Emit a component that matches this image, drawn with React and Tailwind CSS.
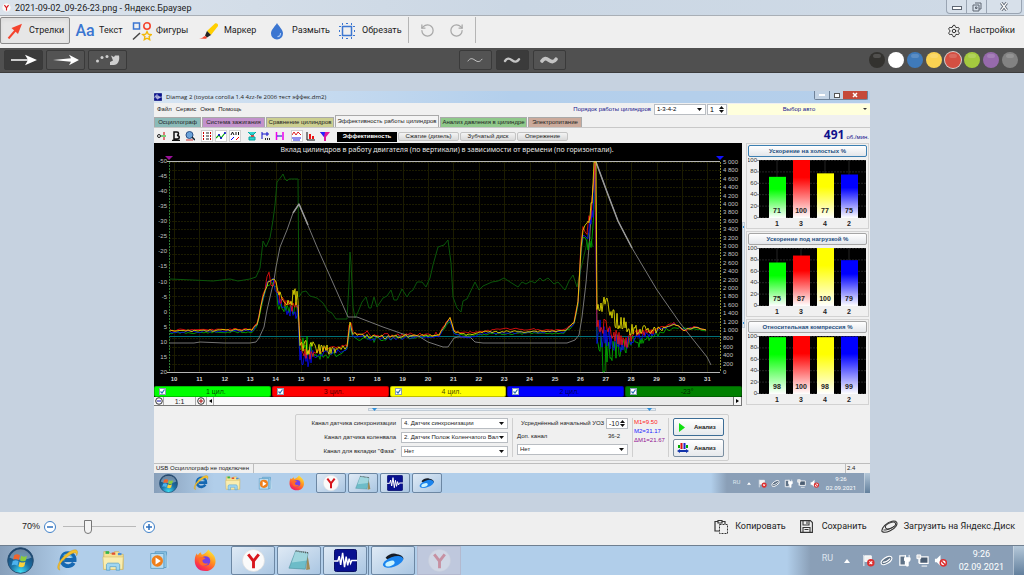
import React, { useState } from 'react'
import { Settings, RotateCcw, RotateCw } from 'lucide-react'

const SWATCHES = [
    { name: 'Чёрный', cls: 'bg-[#33322f]' },
    { name: 'Белый', cls: 'bg-white' },
    { name: 'Синий', cls: 'bg-[#3f7aba]' },
    { name: 'Жёлтый', cls: 'bg-[#fad252]' },
    { name: 'Красный', cls: 'bg-[#d34f42]' },
    { name: 'Зелёный', cls: 'bg-[#a4c93f]' },
    { name: 'Фиолетовый', cls: 'bg-[#966aac]' },
    { name: 'Серый', cls: 'bg-[#828282]' },
]

const TABS = [
    { label: 'Осциллограф', cls: 'w-[47px] bg-[#8abab8]' },
    { label: 'Система зажигания', cls: 'w-[63px] bg-[#c292cb]' },
    { label: 'Сравнение цилиндров', cls: 'w-[68px] bg-[#cccf90]' },
    { label: 'Эффективность работы цилиндров', cls: 'w-[104px] bg-[#f4f4f4]' },
    { label: 'Анализ давления в цилиндре', cls: 'w-[87px] bg-[#8fc88a]' },
    { label: 'Электропитание', cls: 'w-[54px] bg-[#cbaa9b]' },
]

const CYLINDERS = [
    { label: '1 цил.', cls: 'bg-[#00ff00]' },
    { label: '3 цил.', cls: 'bg-[#ff0000]' },
    { label: '4 цил.', cls: 'bg-[#ffff00]' },
    { label: '2 цил.', cls: 'bg-[#0000ff]' },
    { label: '-23°', cls: 'bg-[#008000]' },
]

const BAR_COLORS = ['#00ff00', '#ff0000', '#ffff00', '#0000ff']
const BAR_NAMES = [1, 3, 4, 2]

// [x, y, spread] key points of every trace
const TRACES = [
    {
        color: '#00b800', seed: 11,
        pts: [[16, 190, 1], [98, 189, 1], [103, 183, 1], [109, 156, 2], [113, 142, 2], [118, 141, 3], [122, 146, 5], [124, 163, 4], [134, 166, 5], [144, 168, 7], [146, 203, 9], [153, 203, 12], [162, 212, 5], [174, 214, 3], [193, 207, 2], [196, 184, 1], [199, 195, 2], [220, 197, 3], [235, 195, 3], [285, 193, 1], [292, 183, 1], [296, 178, 1], [300, 190, 1], [310, 193, 1], [330, 191, 1], [410, 190, 1], [420, 182, 1], [424, 164, 2], [427, 110, 3], [429, 95, 3], [434, 100, 9], [439, 90, 14], [441, 30, 0], [442, 60, 4], [443, 200, 12], [449, 213, 17], [460, 208, 17], [470, 203, 9], [485, 200, 5], [500, 193, 3], [512, 187, 2], [522, 185, 1], [540, 186, 1], [552, 188, 0]],
    },
    {
        color: '#0808ff', seed: 29,
        pts: [[16, 189, 1], [98, 188, 1], [103, 182, 1], [109, 155, 2], [113, 140, 2], [119, 138, 3], [125, 160, 5], [134, 168, 5], [144, 169, 8], [146, 213, 12], [155, 212, 12], [162, 212, 3], [180, 208, 3], [193, 206, 2], [196, 182, 1], [199, 194, 2], [220, 195, 3], [285, 194, 1], [292, 181, 1], [296, 177, 1], [300, 190, 1], [312, 195, 1], [330, 190, 1], [410, 189, 1], [420, 181, 1], [424, 162, 2], [427, 106, 3], [429, 94, 3], [434, 90, 6], [439, 70, 12], [441, 19, 0], [443, 190, 16], [455, 195, 13], [468, 203, 7], [480, 195, 5], [500, 190, 3], [512, 184, 1], [520, 181, 1], [530, 187, 1], [540, 184, 1], [552, 187, 0]],
    },
    {
        color: '#ff1010', seed: 47,
        pts: [[16, 187, 1], [98, 186, 1], [103, 180, 1], [109, 153, 2], [113, 136, 3], [115, 129, 1], [117, 140, 3], [122, 142, 4], [126, 155, 5], [134, 162, 5], [144, 166, 7], [146, 203, 8], [155, 212, 6], [162, 209, 3], [180, 204, 3], [193, 203, 2], [195, 182, 1], [197, 179, 1], [199, 190, 2], [208, 193, 2], [213, 188, 1], [218, 193, 2], [285, 191, 2], [292, 180, 1], [296, 174, 1], [300, 188, 1], [310, 190, 1], [330, 188, 1], [350, 186, 1], [410, 187, 1], [420, 179, 1], [424, 158, 2], [427, 102, 3], [429, 84, 2], [433, 88, 4], [438, 60, 8], [441, 19, 0], [443, 188, 14], [453, 182, 10], [465, 196, 8], [475, 197, 8], [485, 190, 4], [500, 189, 3], [512, 183, 1], [520, 180, 1], [530, 188, 1], [540, 184, 1], [552, 187, 0]],
    },
    {
        color: '#f4ec00', seed: 83,
        pts: [[16, 188, 1], [98, 187, 1], [103, 182, 1], [109, 155, 2], [114, 139, 2], [120, 136, 3], [124, 148, 5], [134, 160, 7], [139, 150, 11], [144, 158, 8], [146, 200, 6], [154, 203, 10], [162, 206, 5], [174, 207, 5], [185, 206, 3], [193, 204, 2], [196, 180, 1], [199, 191, 2], [220, 194, 2], [285, 192, 1], [292, 180, 1], [296, 175, 1], [300, 188, 1], [312, 192, 1], [330, 189, 1], [410, 188, 1], [420, 180, 1], [424, 160, 2], [427, 104, 3], [429, 88, 2], [434, 80, 5], [438, 55, 9], [440, 19, 0], [442, 19, 0], [443, 160, 12], [452, 162, 10], [457, 175, 9], [466, 178, 9], [475, 187, 6], [490, 186, 4], [503, 188, 4], [512, 184, 1], [520, 181, 1], [530, 187, 1], [540, 184, 1], [552, 187, 0]],
    },
]

const GREEN_LINE = '16,136 39,137 59,138 76,136 84,138 96,136 102,134 106,125 109,98 112,104 116,95 119,77 121,62 123,39 127,34 129,31 131,36 133,38 135,36 144,36 145,154 148,149 152,148 156,153 163,155 169,160 174,168 178,170 182,176 193,176 195,140 196,109 197,120 199,164 201,175 204,169 208,159 212,154 215,165 217,165 220,154 223,164 229,155 233,153 237,147 240,157 243,157 248,146 253,154 256,149 259,147 263,139 268,139 272,144 276,135 279,122 284,104 290,102 294,97 297,120 299,154 303,165 307,169 309,158 313,156 321,139 325,147 329,143 338,139 344,138 350,135 356,139 364,144 368,139 372,141 377,138 381,140 386,135 389,138 394,135 400,141 404,139 411,147 415,138 419,132 423,144 425,134 429,117 432,104 434,90 437,96 439,104'

const GREY_LINE = '16,200 40,200 46,199 70,200 96,200 102,199 105,195 110,184 113,167 120,137 122,124 126,104 133,87 139,70 145,61 163,104 183,149 194,174 203,174 229,184 249,191 266,194 274,199 289,204 294,204 300,195 304,194 316,194 321,199 329,200 413,200 421,197 425,192 428,174 432,140 435,104 439,44 442,19 453,49 464,78 478,105 503,147 526,180 553,214 557,222'

function tracePath({ pts, seed }) {
    let s = seed
    const rand = () => {
        s = (s * 9301 + 49297) % 233280
        return s / 233280 - 0.5
    }
    const out = []
    for (let i = 0; i < pts.length - 1; i++) {
        const [x0, y0, a0] = pts[i]
        const [x1, y1, a1] = pts[i + 1]
        const step = a0 > 3 ? 1 : 2
        for (let x = x0; x < x1; x += step) {
            const k = (x - x0) / (x1 - x0)
            const amp = a0 + (a1 - a0) * k
            const y = y0 + (y1 - y0) * k + rand() * 2 * amp
            out.push(`${x},${Math.min(229, Math.max(19, y)).toFixed(1)}`)
        }
    }
    const last = pts[pts.length - 1]
    out.push(`${last[0]},${last[1]}`)
    return out.join(' ')
}

function range(n) {
    return Array.from({ length: n }, (_, i) => i)
}

/* ---------- icons ---------- */

const YandexIcon = ({ className }) => (
    <svg viewBox="0 0 24 24" className={className}>
        <circle cx="12" cy="12" r="11.5" fill="#fafafa" stroke="#d9d9d9" strokeWidth=".6" />
        <path d="M6.5 5.5 12 12.6 17.5 5.5M12 12v8" fill="none" stroke="#d8161d" strokeWidth="3" />
    </svg>
)

const OrbIcon = ({ className }) => (
    <svg viewBox="0 0 28 28" className={className}>
        <defs>
            <radialGradient id="orb" cx=".5" cy=".95" r=".9">
                <stop offset="0" stopColor="#3fe0f5" />
                <stop offset=".45" stopColor="#1b6fa5" />
                <stop offset="1" stopColor="#1c3f66" />
            </radialGradient>
        </defs>
        <circle cx="14" cy="14" r="13.3" fill="url(#orb)" stroke="#274d70" />
        <path d="M2.5 11a12 12 0 0 1 23 0c-6 3-17 3-23 0z" fill="#fff" opacity=".35" />
        <path d="M7.5 8.5c2-1.2 4-1.2 6 .1l-1.2 4.8c-2-1.3-4-1.2-6-.2z" fill="#f0632a" />
        <path d="M14.7 9.2c2 1.2 4 1.2 6 0l-1.2 4.8c-2 1.2-4 1.2-6 0z" fill="#8ccc3c" />
        <path d="M6 14.5c2-1.2 4-1.1 6 .1l-1.2 4.8c-2-1.3-4-1.3-6-.3z" fill="#4db2ee" />
        <path d="M13.1 15.2c2 1.2 4 1.2 6 0L17.9 20c-2 1.2-4 1.2-6 0z" fill="#fbd13c" />
    </svg>
)

const ExplorerIcon = ({ className }) => (
    <svg viewBox="0 0 24 24" className={className}>
        <path d="M18.5 14.5a6.8 6.8 0 1 1 .9-3H8.5" fill="none" stroke="#1668b2" strokeWidth="4" />
        <path d="M17 9a6 6 0 0 0-9-2" fill="none" stroke="#57b5ea" strokeWidth="1.5" />
        <path d="M4 22C-1 21 3 12 10 6S23-1 22.5 4c-.1 1-.6 2-1 3 .3-3-1-4-5-2S4 14 3.5 18c-.2 2 .2 3 .5 4z" fill="#f3c02c" stroke="#c98f10" strokeWidth=".4" />
    </svg>
)

const FolderIcon = ({ className }) => (
    <svg viewBox="0 0 26 24" className={className}>
        <path d="M2 2h6l1 2h4l1-2h5l1 3h4v17H2z" fill="#f5e295" stroke="#c9a94d" strokeWidth=".7" />
        <path d="M4 1.5h4v3H4z" fill="#35b44b" />
        <path d="M11 3h4v2.5h-4z" fill="#e2512f" />
        <path d="M18 3.5h4V6h-4z" fill="#4b8fd9" />
        <path d="M1 8h23l-1 14H2z" fill="#f9edb0" stroke="#d7bd66" strokeWidth=".7" />
        <path d="M5 23v-6c0-1 1-2 2-2h11c1 0 2 1 2 2v6h-4v-4H9v4z" fill="#9fd6f2" stroke="#4f9cc9" strokeWidth=".8" />
    </svg>
)

const MediaIcon = ({ className }) => (
    <svg viewBox="0 0 24 24" className={className}>
        <path d="M7 2h13v18H7z" fill="#8cc3e4" stroke="#5c9bc4" />
        <path d="M20 4l3 16-3 1z" fill="#b9d9ec" />
        <path d="M2 4h15v17H2z" fill="#b8dcf2" stroke="#5c9bc4" />
        <circle cx="9.5" cy="12.5" r="6.5" fill="#f07f1b" />
        <path d="M7.5 8.5v8l6-4z" fill="#fff" />
    </svg>
)

const FirefoxIcon = ({ className }) => (
    <svg viewBox="0 0 24 24" className={className}>
        <defs>
            <linearGradient id="fox" x1=".8" y1="0" x2=".2" y2="1">
                <stop offset="0" stopColor="#fff03b" />
                <stop offset=".4" stopColor="#ff9620" />
                <stop offset=".75" stopColor="#ff4040" />
                <stop offset="1" stopColor="#e5127d" />
            </linearGradient>
        </defs>
        <path d="M15 .5c1 2 5 4 6.5 7.5 3 7-1 15-9.5 15S.5 17 .8 11.5C.9 8 2 6 3 4.5c.2 1 .5 1.5 1 2C5 5 6 4 7.5 3.5c-.3 1 0 2 .8 2.5 3-1 5-3 6.700-5.5z" fill="url(#fox)" />
        <circle cx="12" cy="12.5" r="5" fill="#7542e5" />
        <path d="M5 9c2-1 5-1 7 1l-3 1.5c-1 3 3 4.5 6 3-2 4-9 4-10-1.5z" fill="#ff6a2b" />
    </svg>
)

const NotepadIcon = ({ className }) => (
    <svg viewBox="0 0 24 24" className={className}>
        <path d="M20 4l3 17-4 1z" fill="#a08a55" />
        <path d="M8 2l13 2-3 17L1 20z" fill="#6dbcc8" stroke="#4a8d99" strokeWidth=".6" />
        <path d="M8 2l13 2-1.5 8L4 14z" fill="#c3e7ec" opacity=".6" />
        <path d="M8 2l13 2" stroke="#555" strokeWidth="1.6" strokeDasharray="1 1" />
    </svg>
)

const DiamagIcon = ({ className }) => (
    <svg viewBox="0 0 24 24" className={className}>
        <rect x=".5" y=".5" width="23" height="23" rx="2" fill="#08118f" stroke="#050a60" />
        <path d="M0 12.5h4l1.5-5 1.5 9L9 4l2 15 1.7-11 1.6 9 1.5-7 1.5 5 1.2-3H24" fill="none" stroke="#fff" strokeWidth="1.5" />
    </svg>
)

const DiskIcon = ({ className }) => (
    <svg viewBox="0 0 26 18" className={className}>
        <path d="M4 6c3-4 9-6 13-4 5 1 8 3 7 6l-12 5z" fill="#161c26" />
        <ellipse cx="12.5" cy="10.5" rx="12" ry="5.5" transform="rotate(-20 12.5 10.5)" fill="#1b84ee" />
        <ellipse cx="9" cy="12.5" rx="5.5" ry="2.8" transform="rotate(-20 9 12.5)" fill="#c9f3ff" />
    </svg>
)

const TrayFlag = ({ className }) => (
    <svg viewBox="0 0 14 14" className={className}>
        <path d="M2 1v12M3 2h7v6H3z" fill="#f2f2f2" stroke="#fff" />
        <circle cx="9.5" cy="9.5" r="4" fill="#dc2f2f" />
        <path d="M8 8l3 3M11 8l-3 3" stroke="#fff" strokeWidth="1.2" />
    </svg>
)

const TrayDisk = ({ className }) => (
    <svg viewBox="0 0 14 14" className={className}>
        <ellipse cx="7" cy="7" rx="6.5" ry="3.3" transform="rotate(-32 7 7)" fill="#5e7186" stroke="#fff" strokeWidth="1.3" />
        <path d="M3 9c3 0 6-2 8-4" stroke="#fff" strokeWidth="1.2" fill="none" />
    </svg>
)

const TrayPlug = ({ className }) => (
    <svg viewBox="0 0 14 14" className={className}>
        <path d="M2 2h6v10H2z" fill="#5e7186" stroke="#fff" strokeWidth="1.3" />
        <path d="M7 4h6v3l-2 2v4H9V9L7 7zM8 1v3M12 1v3" fill="#fff" stroke="#fff" />
    </svg>
)

const TrayNet = ({ className }) => (
    <svg viewBox="0 0 14 14" className={className}>
        <path d="M4 3h9v7H4z" fill="#4b5d72" stroke="#fff" strokeWidth="1.3" />
        <path d="M1 1h4v4H1zM6 13h6M3 5v5" fill="#ddd" stroke="#fff" />
    </svg>
)

const TraySound = ({ className }) => (
    <svg viewBox="0 0 14 14" className={className}>
        <path d="M1 5h2l4-4v12L3 9H1z" fill="#fff" />
        <circle cx="10" cy="9.5" r="3.3" fill="#fff" stroke="#dc2f2f" strokeWidth="1.6" />
        <path d="M8 7.5l4 4" stroke="#dc2f2f" strokeWidth="1.6" />
    </svg>
)

const ArrowIcon = () => (
    <svg viewBox="0 0 16 16" className="w-4 h-4">
        <path d="M1.5 15.5 10 5.5" stroke="#f4442e" strokeWidth="2" />
        <path d="M15 .8 4.5 5l6.5 6z" fill="#f4442e" />
    </svg>
)

const ShapesIcon = () => (
    <svg viewBox="0 0 20 20" className="w-5 h-5 shrink-0">
        <rect x="1.5" y="2" width="6" height="6" fill="none" stroke="#3b76d1" strokeWidth="1.5" />
        <circle cx="15" cy="5" r="3.2" fill="none" stroke="#f4442e" strokeWidth="1.6" />
        <path d="M1 18.5 8 12" stroke="#444" strokeWidth="1.5" />
        <path d="M15 10.5l1.3 2.7 3 .4-2.2 2 .6 3-2.7-1.4-2.7 1.4.6-3-2.2-2 3-.4z" fill="none" stroke="#f2b705" strokeWidth="1.4" />
    </svg>
)

const MarkerIcon = () => (
    <svg viewBox="0 0 20 18" className="w-5 h-[18px] shrink-0">
        <path d="M8 9 16 1.5c1.5-1 3.5.5 3 2.5L12 13z" fill="#ffcf00" />
        <path d="M8 9l4 4-4 2.5-2-2z" fill="#222" />
        <path d="M0 16.5c3 0 4-1.5 6-2.5l2 1.5c0 1-1 1.3-2 1.3z" fill="#f4442e" />
    </svg>
)

const DropIcon = () => (
    <svg viewBox="0 0 14 18" className="w-[14px] h-[18px] shrink-0">
        <path d="M7 1c1.5 3 6 6.5 6 10.5a6 6 0 0 1-12 0C1 7.5 5.5 4 7 1z" fill="#3b76d1" />
        <path d="M10.5 11c.2 2-1 3.5-3 3.7" fill="none" stroke="#a9c8f5" strokeWidth="1.2" />
    </svg>
)

const CropIcon = () => (
    <svg viewBox="0 0 16 16" className="w-4 h-4 shrink-0">
        <rect x="3.5" y="3.5" width="9" height="9" fill="none" stroke="#3b76d1" strokeWidth="1.5" />
        <path d="M0 3.5h2M14 3.5h2M0 12.5h2M14 12.5h2M3.5 0v2M12.5 0v2M3.5 14v2M12.5 14v2M7 .5h2M7 15.500h2M.5 7v2M15.500 7v2" stroke="#3b76d1" />
    </svg>
)

const Wave = ({ width }) => (
    <svg viewBox="0 0 18 8" className="w-[18px] h-2">
        <path d="M2 5c2-3 4-3 7-.8S14 6 16 3.2" fill="none" stroke="#c4c4c4" strokeWidth={width} strokeLinecap="round" />
    </svg>
)

const CopyIcon = () => (
    <svg viewBox="0 0 14 15" className="w-[14px] h-[15px]">
        <path d="M4 2.5H1v9.5h4M8 2.5h3V5M4 1.5h4V4H4z" fill="none" stroke="#333" strokeWidth="1.2" />
        <path d="M5.5 5.5h8v9h-8z" fill="none" stroke="#333" strokeDasharray="2 1" />
    </svg>
)

const SaveIcon = () => (
    <svg viewBox="0 0 13 13" className="w-[13px] h-[13px]">
        <path d="M.6.6h9.800l2 2v9.800H.6zM3 .6v4.4h6V.6M7 1.5v2.5M3 12V7.5h7V12M4.5 9.5h4" fill="none" stroke="#333" strokeWidth="1.1" />
    </svg>
)

const UploadDiskIcon = () => (
    <svg viewBox="0 0 17 13" className="w-[17px] h-[13px]">
        <path d="M1 11.5C0 8 6 2 11 1.2c5-.8 6 1.8 4 5S5 14 1 11.5z" fill="none" stroke="#333" strokeWidth="1.1" />
        <ellipse cx="9.5" cy="5.5" rx="5.5" ry="2.6" transform="rotate(-25 9.5 5.5)" fill="none" stroke="#333" />
        <path d="M2.5 10c3 .5 8-1.5 11-4" fill="none" stroke="#333" />
    </svg>
)

// small tool glyphs of the oscilloscope window, three to a group
const TOOL_GROUPS = [
    [
        { id: 'zero', box: false, art: <><circle cx="2" cy="5" r="1.5" fill="none" stroke="#222" /><path d="M4 5h5" stroke="#0a0" /><path d="M7 1v3M7 6v3" stroke="#c00" /></> },
        { id: 'bold', box: false, art: <><path d="M3 1h3c2 0 2 3 0 3.500 3 0 3 3.500 0 3.500H3zM1 9.500h8" fill="none" stroke="#111" strokeWidth="1.500" /></> },
        { id: 'globe', box: false, art: <><circle cx="4.500" cy="4" r="3.500" fill="#6aa3da" stroke="#2b4f86" /><path d="M7 6l3 3" stroke="#123" strokeWidth="1.500" /><path d="M1 9h7" stroke="#c33" /></> },
    ],
    [
        { id: 'span', box: true, art: <><path d="M1.500 1v8M8.500 1v8" stroke="#c00" strokeDasharray="2 1" /><path d="M4 2h3M4 5h3M4 8h3" stroke="#222" /></> },
        { id: 'curve', box: true, art: <><path d="M0 7l3-3 2 3 4-5" fill="none" stroke="#0a0" strokeWidth="1.200" /><path d="M2 4h2M4 7h2M8 2h2" stroke="#00c" strokeWidth="1.500" /></> },
        { id: 'values', box: true, art: <><path d="M1 4l1.500-3L4 4M6 1v3M8.500 1v3" fill="none" stroke="#111" /><path d="M1 9l3-3" stroke="#00f" /><path d="M6 9l3-3" stroke="#f00" /></> },
    ],
    [
        { id: 'channels', box: false, art: <><path d="M1 1l3 3h2l3-3M2 6h6v3H2z" fill="#2ed3cf" stroke="#08a39f" /><path d="M4 5h3" stroke="#d22" strokeWidth="1.500" /></> },
        { id: 'shift', box: false, art: <><path d="M1 1v7M1 3h7M6 1v4" stroke="#11c" fill="none" /><path d="M4 8h6" stroke="#333" strokeWidth="2" strokeDasharray="1 1" /></> },
        { id: 'mark', box: false, art: <><path d="M1.500 1v8" stroke="#e0e" strokeWidth="1.500" /><path d="M2 5h5" stroke="#11c" /><path d="M8 1v8" stroke="#e0e" strokeWidth="1.500" /></> },
    ],
    [
        { id: 'sum', box: true, art: <><path d="M0 4l2-3 2 3 2-3 3 3" fill="none" stroke="#d22" /><path d="M0 7h9M1 9h7" stroke="#22d" strokeWidth="1.200" /></> },
        { id: 'chart', box: false, art: <><path d="M1 1v8h8" fill="none" stroke="#111" /><path d="M4 3v5M7 5v3" stroke="#e11" strokeWidth="2" /></> },
        { id: 'filter', box: false, art: <><path d="M0 1h10L6 6v4H4V6z" fill="#e11a9c" /><path d="M0 1h5l-1 5z" fill="#22f" /></> },
    ],
]

/* ---------- viewer chrome ---------- */

function TitleBar() {
    return (
        <header className="flex h-4 items-center justify-between bg-linear-to-r from-[#dbe3ec] via-[#cbd7e4] to-[#cfdae6] border-b border-[#a9afb6] pl-[2px]">
            <div className="flex items-center gap-1">
                <YandexIcon className="w-[9px] h-[9px]" />
                <h1 className="text-[9px] leading-3">2021-09-02_09-26-23.png - Яндекс.Браузер</h1>
            </div>
            <div className="mr-[2px] flex h-[14px] self-start rounded-b border border-t-0 border-[#9aa5b3] bg-[#d7e0ea]">
                <button aria-label="Свернуть" className="flex w-5 items-center justify-center border-r border-[#9aa5b3]">
                    <span className="mt-[2px] h-1 w-[10px] border border-[#5f6773] bg-white" />
                </button>
                <button aria-label="Восстановить" className="flex w-5 items-center justify-center border-r border-[#9aa5b3]">
                    <svg viewBox="0 0 10 10" className="w-[10px] h-[10px]"><path d="M3 1h6v6H7M1 3h6v6H1zM3.500 5h1.500v1.500H3.500z" fill="none" stroke="#5f6773" /></svg>
                </button>
                <button aria-label="Закрыть" className="flex w-[34px] items-center justify-center">
                    <svg viewBox="0 0 10 10" className="w-[10px] h-[9px]"><path d="M2 1l6 8M8 1 2 9" stroke="#5f6773" strokeWidth="3.400" /><path d="M2 1l6 8M8 1 2 9" stroke="#fff" strokeWidth="1.400" /></svg>
                </button>
            </div>
        </header>
    )
}

function ToolButton({ icon, label, className }) {
    return (
        <button className={`flex h-[27px] items-center ${className}`}>
            {icon}
            <span>{label}</span>
        </button>
    )
}

function Toolbar() {
    return (
        <nav className="flex h-8 items-start bg-[#efefef] pt-px text-[9px]">
            <ToolButton icon={<ArrowIcon />} label="Стрелки" className="w-[70px] gap-[6px] rounded-xs border border-[#8b8b8b] bg-[#e6e6e6] pl-[6px] shadow-inner" />
            <ToolButton icon={<span className="w-5 text-[16px] leading-4 font-medium text-[#3b76d1]">Aa</span>} label="Текст" className="w-[61px] gap-1 pl-[5px]" />
            <ToolButton icon={<ShapesIcon />} label="Фигуры" className="w-[66px] gap-1 pl-px" />
            <ToolButton icon={<MarkerIcon />} label="Маркер" className="w-[71px] gap-[5px] pl-[2px]" />
            <ToolButton icon={<DropIcon />} label="Размыть" className="w-[69px] gap-2 pl-[2px]" />
            <ToolButton icon={<CropIcon />} label="Обрезать" className="w-[71px] gap-[7px] pl-[2px]" />
            <div className="flex h-[26px] items-center gap-[14px] border-x border-[#b5b5b5] px-[11px] text-[#a8a8a8]">
                <button aria-label="Отменить"><RotateCcw size={15} /></button>
                <button aria-label="Повторить"><RotateCw size={15} /></button>
            </div>
            <button className="ml-auto mr-[9px] flex h-[27px] items-center gap-2">
                <Settings size={14} strokeWidth={1.5} />
                <span>Настройки</span>
            </button>
        </nav>
    )
}

function StyleButton({ active, label, onClick, wide, children }) {
    return (
        <button
            aria-label={label}
            onClick={onClick}
            className={`flex h-5 items-center justify-center rounded-xs border border-[#3a3a3a] ${wide ? 'w-[39px]' : 'w-[33px]'} ${active ? 'bg-[#3b3b3b]' : 'bg-[#535353]'}`}
        >
            {children}
        </button>
    )
}

function StyleBar() {
    const [arrow, setArrow] = useState(0)
    const [weight, setWeight] = useState(1)
    const [color, setColor] = useState(4)

    return (
        <div className="grid h-[25px] grid-cols-[1fr_auto_1fr] items-center border-b border-[#3c3c3c] bg-[#505050] px-1">
            <div className="flex gap-[3px]">
                <StyleButton wide label="Тонкая стрелка" active={arrow === 0} onClick={() => setArrow(0)}>
                    <svg viewBox="0 0 26 12" className="w-[26px] h-3"><path d="M0 6h20" stroke="#fff" strokeWidth="1.500" /><path d="M14 .8 26 6l-12 5.200L17 6z" fill="#fff" /></svg>
                </StyleButton>
                <StyleButton wide label="Стрелка" active={arrow === 1} onClick={() => setArrow(1)}>
                    <svg viewBox="0 0 26 12" className="w-[26px] h-3"><path d="M0 6 18 4.200 16 .8 26 6l-10 5.200L18 7.800z" fill="#fff" /></svg>
                </StyleButton>
                <StyleButton wide label="Пунктир" active={arrow === 2} onClick={() => setArrow(2)}>
                    <svg viewBox="0 0 26 12" className="w-[26px] h-3" fill="#cfcfcf"><circle cx="2.500" cy="7" r="1.500" /><circle cx="7" cy="3.500" r="1.500" /><circle cx="12" cy="2.500" r="1.500" /><path d="M16 1.500l3 1.500 1-1.500h4c1 5-1 10-6 9.500h-3V8l3-1.500z" /></svg>
                </StyleButton>
            </div>
            <div className="flex gap-1">
                {[1, 2.4, 3.6].map((w, i) => (
                    <StyleButton key={w} label={`Толщина ${i + 1}`} active={weight === i} onClick={() => setWeight(i)}>
                        <Wave width={w} />
                    </StyleButton>
                ))}
            </div>
            <div className="flex items-center justify-end gap-[3px] pr-[2px]">
                {SWATCHES.map((s, i) => (
                    <button
                        key={s.name}
                        aria-label={s.name}
                        onClick={() => setColor(i)}
                        className={`flex h-4 w-4 justify-center rounded-full ${s.cls} ${color === i ? 'ring-1 ring-[#d9d0cf]' : ''}`}
                    >
                        <span className="mt-[2px] h-1 w-2 rounded-full bg-white/15" />
                    </button>
                ))}
            </div>
        </div>
    )
}

function BottomBar() {
    return (
        <footer className="flex h-[33px] items-center justify-between bg-[#efefef] pb-1 pl-[22px] pr-[9px] text-[9px]">
            <div className="flex items-center">
                <label htmlFor="zoom" className="w-[22px] font-['Liberation_Sans',sans-serif]">70%</label>
                <button aria-label="Уменьшить" className="flex">
                    <svg viewBox="0 0 12 12" className="w-3 h-3"><circle cx="6" cy="6" r="5.500" fill="#fff" stroke="#3f80c8" /><path d="M3 6h6" stroke="#2c6fbd" strokeWidth="1.500" /></svg>
                </button>
                <input
                    id="zoom"
                    type="range"
                    min="0"
                    max="100"
                    defaultValue="32"
                    className="mx-[7px] h-4 w-[73px] appearance-none bg-transparent [&::-webkit-slider-runnable-track]:h-px [&::-webkit-slider-runnable-track]:bg-[#b9b9b9] [&::-webkit-slider-thumb]:-mt-[6px] [&::-webkit-slider-thumb]:h-[14px] [&::-webkit-slider-thumb]:w-2 [&::-webkit-slider-thumb]:appearance-none [&::-webkit-slider-thumb]:rounded-b-full [&::-webkit-slider-thumb]:border [&::-webkit-slider-thumb]:border-[#777] [&::-webkit-slider-thumb]:bg-[#f3f3f3]"
                />
                <button aria-label="Увеличить" className="flex">
                    <svg viewBox="0 0 12 12" className="w-3 h-3"><circle cx="6" cy="6" r="5.500" fill="#fff" stroke="#3f80c8" /><path d="M3 6h6M6 3v6" stroke="#2c6fbd" strokeWidth="1.500" /></svg>
                </button>
            </div>
            <div className="flex items-center gap-[14px]">
                <button className="flex items-center gap-[7px]"><CopyIcon />Копировать</button>
                <button className="flex items-center gap-[9px]"><SaveIcon />Сохранить</button>
                <button className="flex items-center gap-[6px]"><UploadDiskIcon />Загрузить на Яндекс.Диск</button>
            </div>
        </footer>
    )
}

function Taskbar({ small }) {
    const icon = small ? 'w-4 h-4' : 'w-[23px] h-[23px]'
    const pin = small ? 'flex w-8 items-center justify-center' : 'flex w-[46px] items-center justify-center'
    const orb = small ? 'flex w-[31px] items-center justify-center pr-[2px]' : 'flex w-11 items-center justify-center pr-1'
    const task = `flex items-center justify-center rounded-xs border border-[#6c87a3] bg-linear-to-br from-[#dfeaf5] to-[#aac6e2] ${small ? 'w-[30px]' : 'w-11'}`
    const tray = small ? 'w-[9px] h-[9px]' : 'w-[13px] h-[13px]'

    return (
        <div className={`flex justify-between overflow-hidden bg-[#b1ceea] ${small ? 'h-5' : 'h-[30px] border-t border-[#6f7f90]'}`}>
            <div className={`flex bg-linear-to-r from-[#879fba] to-transparent bg-no-repeat ${small ? 'bg-size-[60px_100%]' : 'bg-size-[70px_100%]'}`}>
                <button aria-label="Пуск" className={orb}><OrbIcon className={small ? 'w-[19px] h-[19px]' : 'w-[27px] h-[27px]'} /></button>
                <button aria-label="Internet Explorer" className={pin}><ExplorerIcon className={icon} /></button>
                <button aria-label="Проводник" className={pin}><FolderIcon className={icon} /></button>
                <button aria-label="Media Player" className={pin}><MediaIcon className={small ? 'w-[15px] h-[15px]' : 'w-[21px] h-[21px]'} /></button>
                <button aria-label="Firefox" className={pin}><FirefoxIcon className={icon} /></button>
                <div className="ml-[3px] flex gap-[2px]">
                    <button aria-label="Яндекс" className={task}><YandexIcon className={icon} /></button>
                    <button aria-label="Блокнот" className={task}><NotepadIcon className={icon} /></button>
                    <div className={small ? 'flex' : 'flex border-r border-[#6c87a3] pr-px'}>
                        <button aria-label="Diamag" className={task}><DiamagIcon className={icon} /></button>
                    </div>
                    <button aria-label="Яндекс.Диск" className={task}><DiskIcon className={icon} /></button>
                    {!small && (
                        <button aria-label="Скриншот" className="flex w-11 items-center justify-center border border-[#b3b9cf] bg-[#bfc8dd]">
                            <YandexIcon className="w-[23px] h-[23px] opacity-30" />
                        </button>
                    )}
                </div>
            </div>
            <div className={`flex items-center bg-linear-to-r from-transparent to-[#8a9fb7] to-10% text-white ${small ? 'pl-[22px] text-[6px] leading-[9px]' : 'pl-[35px] text-[9px] leading-[13px]'}`}>
                <span className={small ? 'w-[11px] pb-[3px] text-[#dde5ee]' : 'w-[14px] pb-[5px] text-[#dde5ee]'}>RU</span>
                <svg viewBox="0 0 6 4" className={small ? 'mx-[3px] w-1 h-[3px]' : 'mx-2 w-[6px] h-1'}><path d="M3 0l3 4H0z" fill="#fff" /></svg>
                <div className={small ? 'flex gap-1 pl-1' : 'flex gap-[5px] pl-1'}>
                    <TrayFlag className={tray} />
                    <TrayDisk className={tray} />
                    <TrayPlug className={tray} />
                    <TrayNet className={tray} />
                    <TraySound className={tray} />
                </div>
                <div className={small ? 'ml-[7px] mr-2 text-center' : 'ml-3 mr-[9px] text-center'}>
                    <div>9:26</div>
                    <div>02.09.2021</div>
                </div>
                <div className={`h-full border-l border-[#d5e0ea]/60 bg-linear-to-b from-[#b5c8d9] to-[#63809d] ${small ? 'w-[6px]' : 'w-[11px]'}`} />
            </div>
        </div>
    )
}

/* ---------- oscilloscope window ---------- */

const DownMark = () => (
    <svg viewBox="0 0 5 3" className="pointer-events-none w-[5px] h-[3px]"><path d="M0 0h5L2.500 3z" fill="#111" /></svg>
)

const SplitMark = () => (
    <svg viewBox="0 0 5 3" className="w-[5px] h-[3px]"><path d="M0 0h5L2.500 3z" fill="#2f8fd8" /></svg>
)

function Combo({ id, value, className }) {
    return (
        <div className={`relative flex h-[11px] items-center border border-[#b9bdc2] bg-white ${className}`}>
            <select id={id} className="h-full w-full appearance-none bg-transparent pl-[2px] pr-2 text-[6px] leading-[9px] outline-none">
                <option>{value}</option>
            </select>
            <div className="pointer-events-none absolute right-[3px]"><DownMark /></div>
        </div>
    )
}

function Spin({ id, value, className }) {
    return (
        <div className={`flex h-[11px] shrink-0 items-center border border-[#b9bdc2] bg-white ${className}`}>
            <input id={id} defaultValue={value} className="w-0 flex-1 pl-[2px] text-[7px] leading-[9px] outline-none" />
            <div className="flex flex-col gap-px pr-[2px]">
                <button aria-label="Больше" className="flex"><svg viewBox="0 0 5 3" className="w-[5px] h-[3px]"><path d="M0 3h5L2.500 0z" fill="#111" /></svg></button>
                <button aria-label="Меньше" className="flex"><DownMark /></button>
            </div>
        </div>
    )
}

function MainChart() {
    return (
        <svg viewBox="0 0 588 243" className="block w-full bg-black font-['Liberation_Sans',sans-serif] text-[6px]" role="img">
            <text x="293" y="9" textAnchor="middle" fill="#e4e4e4" className="font-['Noto_Sans',sans-serif] text-[7px]">
                Вклад цилиндров в работу двигателя (по вертикали) в зависимости от времени (по горизонтали).
            </text>
            <g stroke="#1b1b00" shapeRendering="crispEdges">
                {range(26).map(i => <path key={i} d={`M15 ${Math.round(19 + i * 8.4) + 0.5}H566`} strokeDasharray="2 1" />)}
                {range(22).map(i => <path key={i} d={`M${Math.round(20 + i * 25.4) + 0.5} 19V229`} />)}
            </g>
            <g shapeRendering="crispEdges" fill="none">
                <path d="M15 19V229" stroke="#2c7a34" strokeDasharray="2 1" />
                <path d="M566 19V229" stroke="#8f8f30" strokeDasharray="2 1" />
                <path d="M13 18.500H566M13 229.500H566" stroke="#b5b5b5" />
                <path d="M15 193.500H566" stroke="#007078" />
            </g>
            <path d="M11 13h8l-4 4z" fill="#9a109a" />
            <path d="M562 13h8l-4 4z" fill="#1010ff" />
            <g fill="#c2c2c2" textAnchor="end">
                {range(15).map(i => <text key={i} x="13" y={20 + i * 15.07}>{i * 5 - 50}</text>)}
            </g>
            <g fill="#c2c2c2">
                {range(26).map(i => {
                    const v = 5000 - i * 200
                    const label = v >= 1000 ? `${Math.floor(v / 1000)} ${String(v % 1000).padStart(3, '0')}` : v
                    return <text key={v} x="569" y={21 + i * 8.4}>{label}</text>
                })}
            </g>
            <g fill="#d4d4d4" textAnchor="middle" fontWeight="bold">
                {range(22).map(i => <text key={i} x={20 + i * 25.4} y="238">{i + 10}</text>)}
            </g>
            <g fill="none" strokeLinejoin="round">
                <polyline points={GREEN_LINE} stroke="#0a560a" />
                <polyline points={GREY_LINE} stroke="#757575" />
                <path d="M139 70l6-9 9 21M442 19l11 30 11 29 14 27" stroke="#9a9a9a" strokeWidth="1.500" />
                {TRACES.map(t => <polyline key={t.seed} points={tracePath(t)} stroke={t.color} strokeWidth=".8" />)}
            </g>
        </svg>
    )
}

function BarPanel({ title, values, active }) {
    const id = `bars-${values.join('-')}`
    return (
        <section className="border border-[#d2d2d2] p-px">
            <button className={`block h-3 w-full rounded-xs border bg-linear-to-b from-white to-[#e3e6ea] text-[6px] leading-[10px] font-bold text-[#1d4e80] ${active ? 'border-[#3c7fb1]' : 'border-[#a5a5a5]'}`}>
                {title}
            </button>
            <svg viewBox="0 0 119 70" className="block w-full text-[6px]" role="img">
                <defs>
                    {BAR_COLORS.map(c => (
                        <linearGradient key={c} id={`${id}${c.slice(1)}`} x1="0" y1="0" x2="0" y2="1">
                            <stop offset=".3" stopColor={c} />
                            <stop offset="1" stopColor="#fff" />
                        </linearGradient>
                    ))}
                </defs>
                <rect x="11" y="3" width="107" height="58" fill="#000" />
                {range(6).map(i => (
                    <g key={i}>
                        <path d={`M11 ${3.5 + i * 11.4}H118`} stroke="#333" strokeWidth=".7" strokeDasharray="2 1" />
                        <path d={`M9 ${3.5 + i * 11.4}H11`} stroke="#555" strokeWidth=".7" />
                        <text x="10" y={5 + i * 11.4} dx="-1" textAnchor="end" fill="#333">{100 - i * 20}</text>
                    </g>
                ))}
                {values.map((v, i) => (
                    <g key={i} textAnchor="middle" fontWeight="bold">
                        <path d={`M${29 + i * 24} 3V61`} stroke="#333" strokeWidth=".7" />
                        <rect x={21 + i * 24} y={61 - v * 0.58} width="17" height={v * 0.58} fill={`url(#${id}${BAR_COLORS[i].slice(1)})`} />
                        <text x={29 + i * 24} y="56" className="text-[7px]" fill="#222">{v}</text>
                        <text x={29 + i * 24} y="69" className="text-[7px]" fill="#222">{BAR_NAMES[i]}</text>
                    </g>
                ))}
            </svg>
        </section>
    )
}

function ChannelRow({ id, label, value }) {
    return (
        <div className="flex items-center justify-end gap-[5px]">
            <label htmlFor={id}>{label}</label>
            <Combo id={id} value={value} className="w-[107px]" />
        </div>
    )
}

function SettingsBox() {
    return (
        <div className="mx-auto flex w-[434px] rounded-xs border border-[#cfcfcf] py-[3px] pr-1">
            <div className="flex w-[212px] flex-col gap-[3px]">
                <ChannelRow id="sync" label="Канал датчика синхронизации" value="4.  Датчик синхронизации" />
                <ChannelRow id="crank" label="Канал датчика коленвала" value="2.  Датчик Полож Коленчатого Вал" />
                <ChannelRow id="phase" label={'Канал для вкладки "Фаза"'} value="Нет" />
            </div>
            <div className="ml-1 flex w-[120px] flex-col gap-[2px] border-l border-[#cfcfcf] px-1">
                <div className="flex items-center justify-between pl-1 whitespace-nowrap">
                    <label htmlFor="uoz">Усреднённый начальный УОЗ</label>
                    <Spin id="uoz" value="-10" className="w-[22px]" />
                </div>
                <div className="flex items-center justify-between pr-2 leading-[11px]">
                    <label htmlFor="extra">Доп. канал</label>
                    <span>36-2</span>
                </div>
                <Combo id="extra" value="Нет" className="w-full" />
            </div>
            <div className="w-[37px] border-x border-[#cfcfcf] pl-px text-[6px] leading-[9px]">
                <div className="text-[#ff2020]">M1=9.50</div>
                <div className="text-[#2020ff]">M2=31.17</div>
                <div className="text-[#901090]">ΔM1=21.67</div>
            </div>
            <div className="ml-1 flex flex-1 flex-col gap-[3px]">
                <button className="flex h-[18px] items-center gap-[9px] rounded-xs border border-[#3c6d96] bg-linear-to-b from-white to-[#e6e9ec] pl-1 text-[6px] font-bold">
                    <svg viewBox="0 0 7 9" className="w-[7px] h-[9px]"><path d="M1 0l6 4.500L1 9z" fill="#10e010" /></svg>
                    Анализ
                </button>
                <button className="flex h-[18px] items-center gap-[5px] rounded-xs border border-[#7a8ea0] bg-linear-to-b from-white to-[#e6e9ec] pl-[3px] text-[6px] font-bold">
                    <svg viewBox="0 0 12 10" className="w-3 h-[10px]"><path d="M2 2v3M10 2v3" stroke="#0a0" strokeWidth="2" /><path d="M4.500 0v6" stroke="#d11" strokeWidth="2" /><path d="M7.500 0v6" stroke="#22c" strokeWidth="2" /><path d="M0 8l3-2v1h6V6l3 2-3 2V9H3v1z" fill="#13a" /></svg>
                    Анализ
                </button>
            </div>
        </div>
    )
}

function ScopeWindow() {
    const [tab, setTab] = useState(3)
    const modes = [
        { label: 'Сжатие (дизель)', cls: 'w-[61px]' },
        { label: 'Зубчатый диск', cls: 'w-[56px]' },
        { label: 'Опережение', cls: 'w-[51px]' },
    ]

    return (
        <div className="mx-auto w-full max-w-[716px] bg-[#f0f0f0] font-['Liberation_Sans',sans-serif] text-[6px] leading-[9px] text-[#222]">
            <div className="flex h-3 items-center justify-between bg-linear-to-r from-[#d6e4f2] via-[#b3cfec] to-[#b5cfea]">
                <div className="flex items-center gap-1 font-['Open_Sans',sans-serif]">
                    <DiamagIcon className="w-2 h-2" />
                    <span>Diamag 2 (toyota corolla 1.4 4zz-fe 2006 тест эффек.dm2)</span>
                </div>
                <div className="mr-[2px] flex self-start rounded-b-xs border border-t-0 border-[#6f8298]">
                    <button aria-label="Свернуть окно" className="flex h-2 w-[14px] items-center justify-center bg-[#c3d3e4]"><span className="h-[2px] w-[6px] bg-white" /></button>
                    <button aria-label="Восстановить окно" className="flex h-2 w-[14px] items-center justify-center border-l border-[#6f8298] bg-[#c3d3e4]"><span className="h-[5px] w-[6px] border border-[#555] bg-white" /></button>
                    <button aria-label="Закрыть окно" className="flex h-2 w-6 items-center justify-center bg-[#c5493a]">
                        <svg viewBox="0 0 6 6" className="w-[6px] h-[6px]"><path d="M1 1l4 4M5 1 1 5" stroke="#fff" strokeWidth="1.500" /></svg>
                    </button>
                </div>
            </div>

            <div className="flex h-3 items-center justify-between pl-[3px]">
                <div className="flex gap-1">
                    {['Файл', 'Сервис', 'Окна', 'Помощь'].map(m => <button key={m}>{m}</button>)}
                </div>
                <div className="flex items-center text-[#15158c]">
                    <label htmlFor="order">Порядок работы цилиндров</label>
                    <Combo id="order" value="1-3-4-2" className="ml-[3px] w-[52px] text-black" />
                    <Spin id="first" value="1" className="ml-px w-[20px] text-black" />
                    <button className="relative ml-px h-[11px] w-[142px] bg-[#ffffdc] text-center">
                        Выбор авто
                        <span className="absolute right-[3px] top-1"><svg viewBox="0 0 4 3" className="w-1 h-[3px]"><path d="M0 0h4L2 2z" fill="#333" /></svg></span>
                    </button>
                </div>
            </div>

            <div className="flex h-[13px] items-end gap-px border-b border-[#c8c8c8]" role="tablist">
                {TABS.map((t, i) => (
                    <button
                        key={t.label}
                        role="tab"
                        aria-selected={tab === i}
                        onClick={() => setTab(i)}
                        className={`whitespace-nowrap border border-b-0 border-[#a9a9a9] text-center ${tab === i ? 'h-3' : 'h-[10px]'} ${t.cls}`}
                    >
                        {t.label}
                    </button>
                ))}
            </div>

            <div className="flex h-[15px] items-center">
                <div className="flex w-[183px] items-center justify-between pl-[2px] pr-[6px]">
                    {TOOL_GROUPS.map((group, i) => (
                        <div key={i} className="flex gap-[2px]">
                            {group.map(g => (
                                <button key={g.id} aria-label={g.id} className={g.box ? 'border border-[#d0d0d0] bg-white' : 'p-px'}>
                                    <svg viewBox="0 0 10 10" className="block h-[10px] w-[10px]" fill="none">{g.art}</svg>
                                </button>
                            ))}
                        </div>
                    ))}
                </div>
                <div className="flex items-center gap-px pt-[2px]">
                    <button className="h-[10px] w-[60px] bg-black font-bold text-white">Эффективность</button>
                    {modes.map(m => (
                        <button key={m.label} className={`h-[9px] rounded-xs border border-[#c4c4c4] bg-linear-to-b from-[#f4f4f4] to-[#dadada] leading-[7px] ${m.cls}`}>{m.label}</button>
                    ))}
                </div>
                <div className="ml-auto mr-px flex items-baseline gap-[2px] text-[#10108c]">
                    <span className="font-['Open_Sans',sans-serif] text-[12px] leading-3 font-bold">491</span>
                    <span>об./мин.</span>
                </div>
            </div>

            <div className="flex items-start">
                <div className="min-w-0 flex-1">
                    <MainChart />
                    <div className="grid grid-cols-5 gap-px bg-black">
                        {CYLINDERS.map(c => (
                            <label key={c.label} className={`flex h-[11px] items-center rounded-xs border border-black/25 px-1 text-[7px] text-black/75 ${c.cls}`}>
                                <span className="relative flex">
                                    <input type="checkbox" defaultChecked className="peer h-[7px] w-[7px] appearance-none border border-[#8aa0b5] bg-white" />
                                    <svg viewBox="0 0 7 7" className="pointer-events-none invisible absolute inset-0 h-[7px] w-[7px] peer-checked:visible"><path d="M1.500 3.500 3 5l2.500-3.500" fill="none" stroke="#2b6fb5" strokeWidth="1.200" /></svg>
                                </span>
                                <span className="flex-1 text-center">{c.label}</span>
                            </label>
                        ))}
                    </div>
                    <div className="flex h-[9px] items-stretch border-b border-[#777] bg-[#f6f6f6]">
                        <button aria-label="Сжать" className="flex w-[9px] items-center justify-center"><svg viewBox="0 0 8 8" className="h-2 w-2"><circle cx="4" cy="4" r="3.300" fill="#fff" stroke="#333" /><path d="M2 4h4" stroke="#11a" /></svg></button>
                        <span className="w-[33px] border-x border-[#aaa] text-center text-[7px]">1:1</span>
                        <button aria-label="Растянуть" className="flex w-[10px] items-center justify-center"><svg viewBox="0 0 8 8" className="h-2 w-2"><circle cx="4" cy="4" r="3.300" fill="#fff" stroke="#333" /><path d="M2 4h4M4 2v4" stroke="#a11" /></svg></button>
                        <button aria-label="Влево" className="flex w-2 items-center justify-center border-x border-[#aaa]"><svg viewBox="0 0 3 4" className="h-1 w-[3px]"><path d="M3 0v4L0 2z" /></svg></button>
                        <div className="flex-1 bg-linear-to-r from-[#fafafa] from-30% to-[#eaeaea] to-30%" />
                        <button aria-label="Вправо" className="flex w-[9px] items-center justify-center border-x border-[#777]"><svg viewBox="0 0 3 4" className="h-1 w-[3px]"><path d="M0 0v4l3-2z" /></svg></button>
                    </div>
                </div>
                <div className="flex w-[4px] items-center self-stretch bg-[#f0f0f0]">
                    <div className="flex h-[106px] w-[3px] flex-col justify-between border border-[#c2ccd6] bg-[#e4edf6] py-[3px]">
                        <span className="h-[2px] bg-[#2f8fd8]" />
                        <span className="h-[2px] bg-[#2f8fd8]" />
                    </div>
                </div>
                <aside className="mr-px flex w-[123px] flex-col gap-[2px]">
                    <BarPanel active title="Ускорение на холостых %" values={[71, 100, 77, 75]} />
                    <BarPanel title="Ускорение под нагрузкой %" values={[75, 87, 100, 79]} />
                    <BarPanel title="Относительная компрессия %" values={[98, 100, 98, 99]} />
                </aside>
            </div>

            <div className="mx-auto mt-[2px] mb-[3px] flex h-[3px] w-[288px] items-center justify-between border border-[#c2ccd6] bg-[#e4edf6] px-[3px]">
                <SplitMark />
                <SplitMark />
            </div>
            <SettingsBox />

            <div className="mt-[2px] flex h-[10px] items-center border-t border-[#bdbdbd]">
                <span className="w-[100px] border-r border-[#bdbdbd] pl-[2px]">USB Осциллограф не подключен</span>
                <span className="ml-auto w-[25px] border-l border-[#bdbdbd] pl-px">2.4</span>
            </div>
            <div className="font-['Roboto',sans-serif]"><Taskbar small /></div>
        </div>
    )
}

export default function App() {
    return (
        <div className="flex min-h-screen flex-col bg-[#c6d2e0] font-['Roboto','Noto_Sans',sans-serif] text-[#1c1c1c]">
            <TitleBar />
            <Toolbar />
            <StyleBar />
            <main className="flex-1 py-[18px]">
                <ScopeWindow />
            </main>
            <BottomBar />
            <Taskbar />
        </div>
    )
}
